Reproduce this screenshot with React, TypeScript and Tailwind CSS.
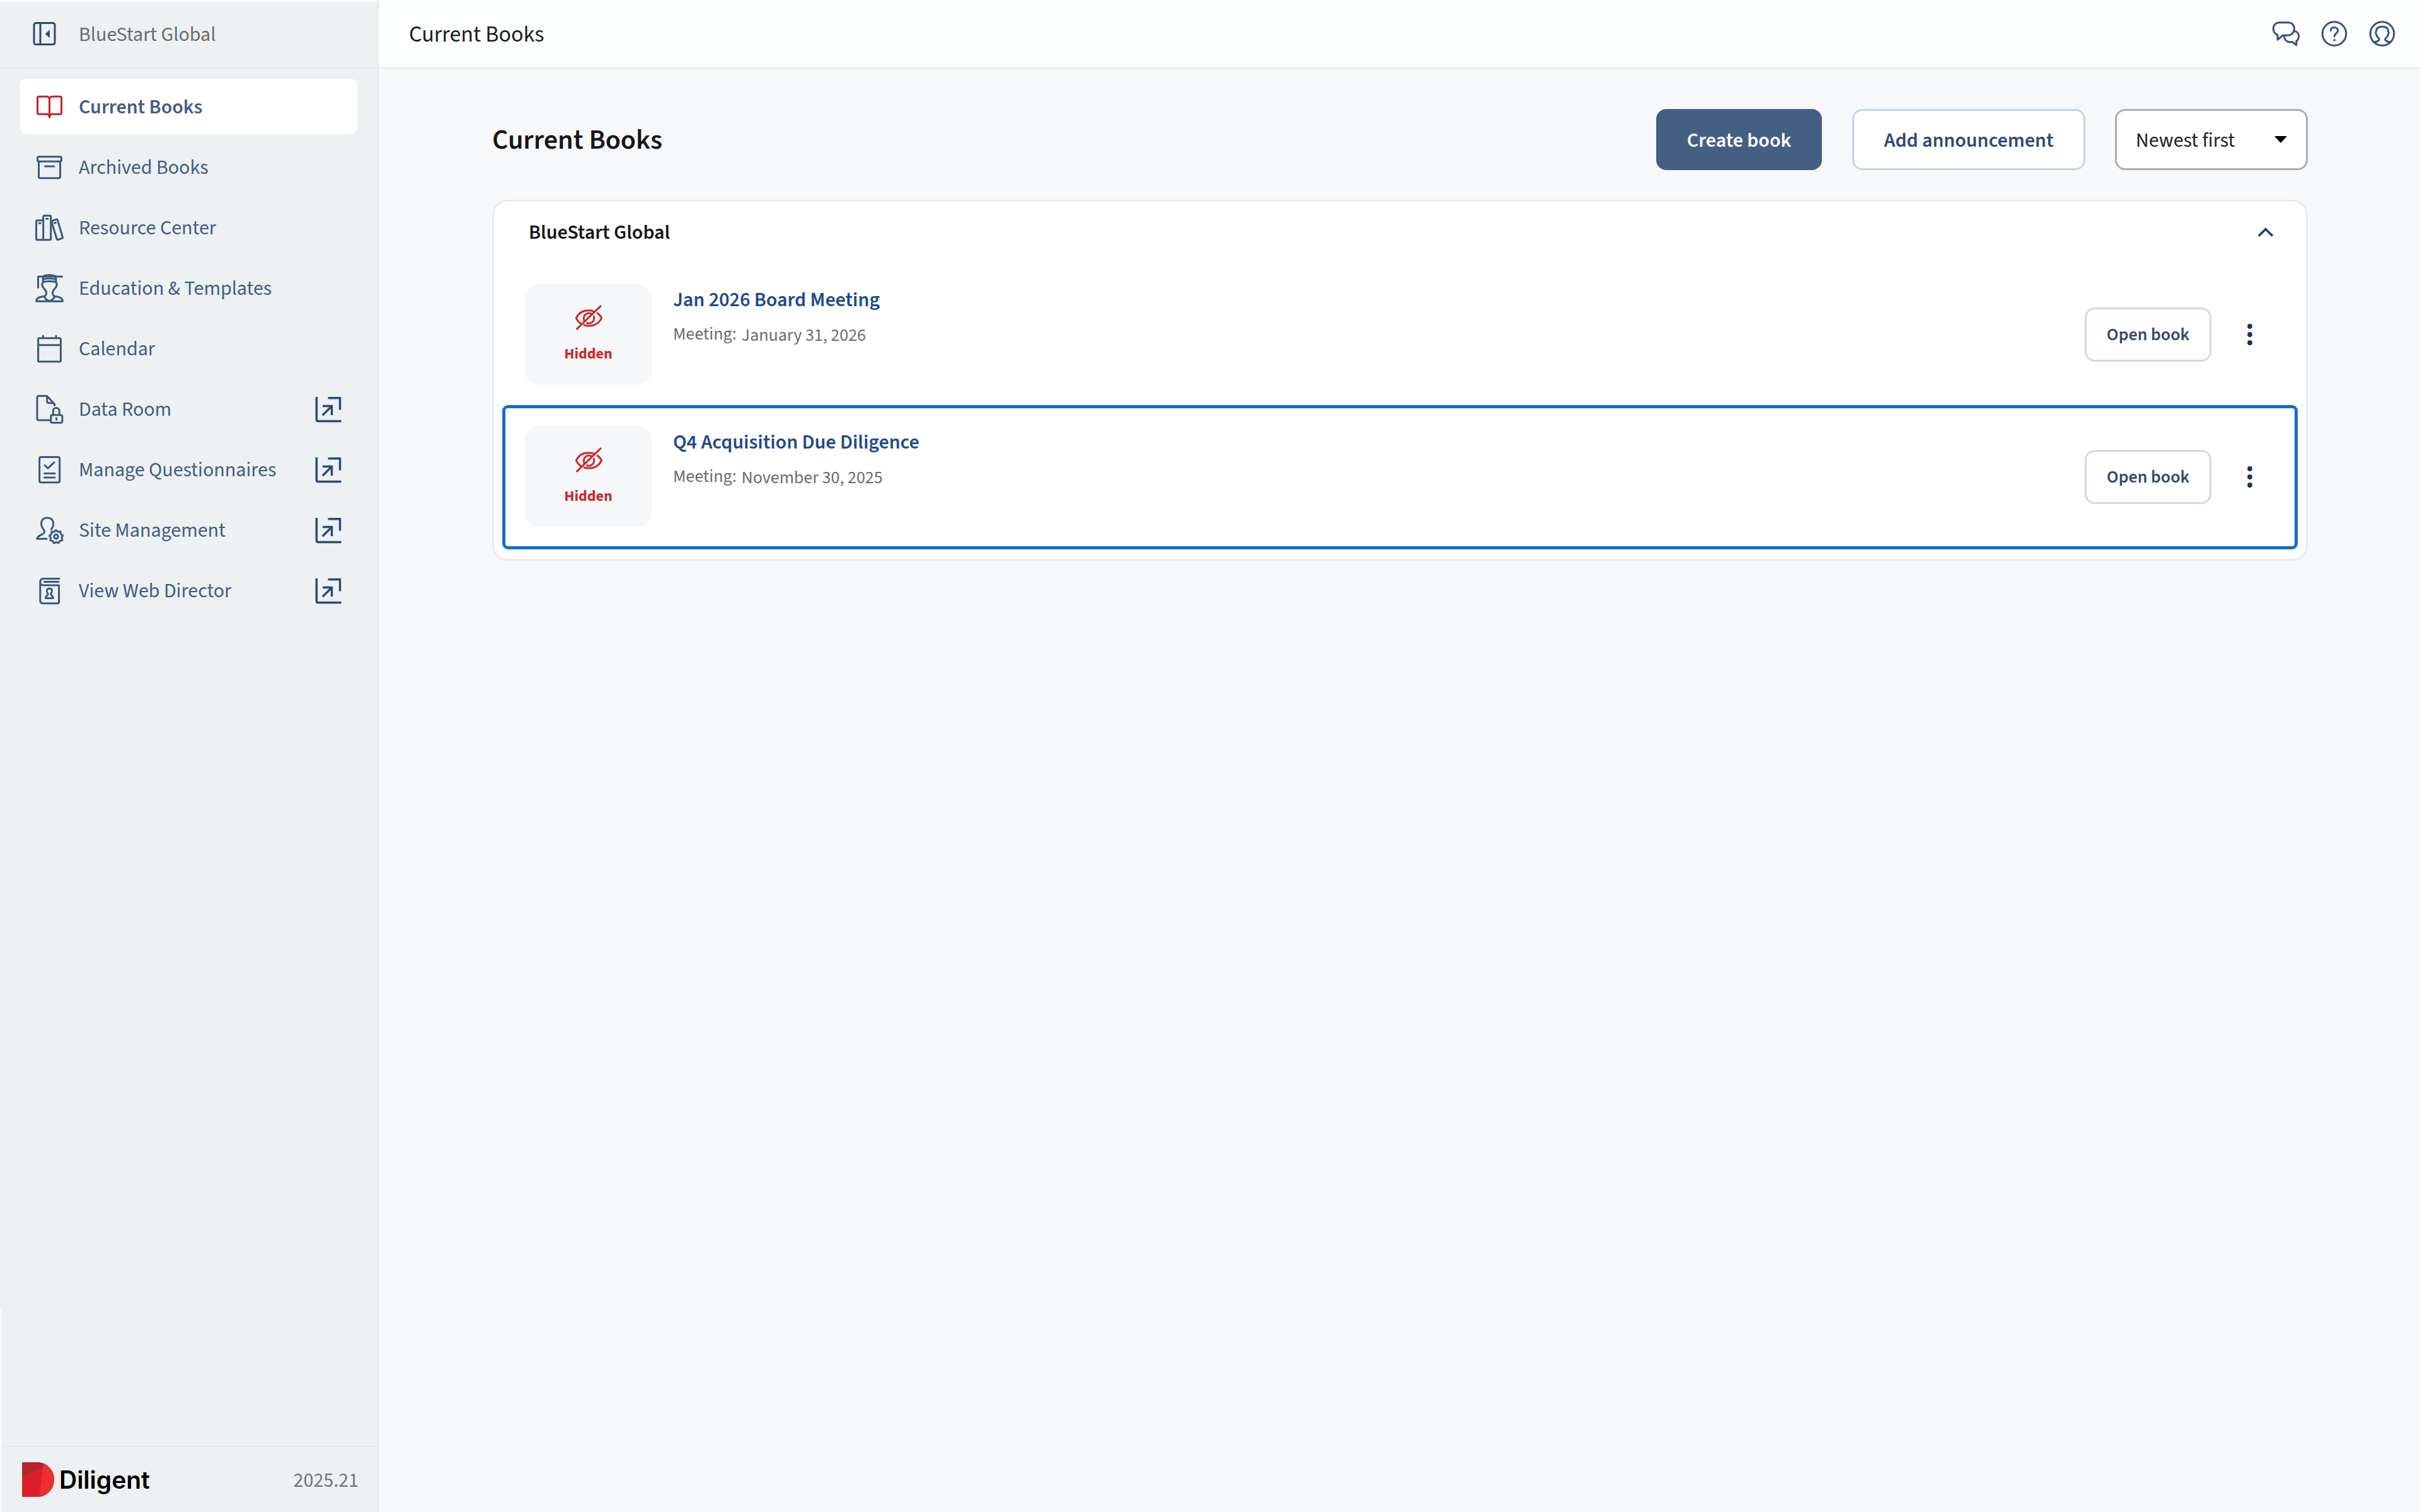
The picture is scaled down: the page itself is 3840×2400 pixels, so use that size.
import type { ReactNode } from "react";

function Icon({
  children,
  className = "",
  strokeWidth = 3,
}: {
  children: ReactNode;
  className?: string;
  strokeWidth?: number;
}) {
  return (
    <svg
      viewBox="0 0 48 48"
      className={`h-12 w-12 shrink-0 ${className}`}
      fill="none"
      stroke="currentColor"
      strokeWidth={strokeWidth}
      strokeLinecap="round"
      strokeLinejoin="round"
    >
      {children}
    </svg>
  );
}

const BookIcon = () => (
  <Icon>
    <path d="M24.5 11C23.5 9 22 8.3 20 8.3H8C6.5 8.3 5.5 9.3 5.5 10.8V34C5.5 35.5 6.5 36.3 8 36.3H20C22.5 36.3 24 38 24.5 41C25 38 26.5 36.3 29 36.3H41C42.5 36.3 43.5 35.5 43.5 34V10.8C43.5 9.3 42.5 8.3 41 8.3H29C27 8.3 25.5 9 24.5 11Z" />
    <path d="M24.5 11V41" />
  </Icon>
);

const ArchiveIcon = () => (
  <Icon>
    <path d="M8 7.8H41C42.5 7.8 43.5 8.6 43.5 10V13C43.5 14.4 42.5 15.2 41 15.2H8C6.5 15.2 5.5 14.4 5.5 13V10C5.5 8.6 6.5 7.8 8 7.8Z" />
    <path d="M7.5 15.5V39.5C7.5 41 8.5 41.7 10 41.7H39C40.5 41.7 41.5 41 41.5 39.5V15.5" />
    <path d="M17.5 23H32" />
  </Icon>
);

const ShelfIcon = () => (
  <Icon>
    <path d="M14.5 12.8H5.5C4.2 12.8 3.5 13.5 3.5 14.8V42C3.5 43.2 4.2 43.8 5.5 43.8H24.5C26 43.8 26.7 43.2 26.7 42V7C26.7 5.8 26 5.2 24.5 5.2H16.8C15.4 5.2 14.7 5.8 14.7 7V43.5" />
    <path d="M28.2 13.8L35.5 11.2C36.4 10.9 37 11.3 37.3 12.2L45.4 39.5C45.7 40.6 45.3 41.1 44.4 41.4L38 43.5C37 43.8 36.5 43.4 36.2 42.5L28 15.5C27.8 14.7 27.6 14 28.2 13.8Z" />
    <path d="M8 17.3H10.3M19.6 10.3H21.8M32.3 17.2L34.3 16.5" />
  </Icon>
);

const GraduateIcon = () => (
  <Icon>
    <path d="M6.5 23.5V6H44.5" />
    <path d="M14 6C19 2.6 30 2.6 35 6M14.2 6V14.3M34.8 6V14.3M14.2 10.5C20 8.6 29 8.6 34.8 10.5M14.2 14.8C20 13.2 29 13.2 34.8 14.8" />
    <path d="M14.2 14.5C12 18 12.6 21.5 15.5 24.5C18.5 28 20 29.5 19.5 33C19 36 17.5 37 15.5 37.5C7.5 38 3.8 40.5 3.6 45.3H45.4C45.2 40.5 41.5 38 33.5 37.5C31.5 37 30 36 29.5 33C29 29.5 30.5 28 33.5 24.5C36.4 21.5 37 18 34.8 14.5" />
    <path d="M16 37.8C18 41.5 20.5 44 24.5 45C28.5 44 31 41.5 33 37.8" />
  </Icon>
);

const CalendarIcon = () => (
  <Icon>
    <path d="M8.5 7.8H40.5C41.8 7.8 42.4 8.5 42.4 9.7V43.2C42.4 44.4 41.8 45 40.5 45H8.5C7.2 45 6.6 44.4 6.6 43.2V9.7C6.6 8.5 7.2 7.8 8.5 7.8Z" />
    <path d="M6.6 18.8H42.4M14.4 4V7.5M35 4V7.5" />
  </Icon>
);

const DataRoomIcon = () => (
  <Icon>
    <path d="M25.5 42H7.5C5.8 42 5 41.2 5 39.5V6C5 4.4 5.8 3.6 7.5 3.6H20.5L32.5 16.5V18.5" />
    <path d="M20.7 4V12C20.7 14 21.6 14.8 23.5 14.8H31" />
    <path d="M30.3 33.5V27.5C30.3 24.5 32.3 22.6 35.2 22.6S40.2 24.5 40.2 27.5V33.5" />
    <rect x="26.8" y="33.8" width="18" height="12.3" rx="2" />
    <path d="M35.6 38.8V41" />
  </Icon>
);

const QuestionnaireIcon = () => (
  <Icon>
    <rect x="8.6" y="4.6" width="32" height="40.2" rx="2.5" />
    <path d="M17 17.5L21.8 22.3L32 12.8M16.5 30.5H33M16.5 37H33" />
  </Icon>
);

const SiteIcon = () => (
  <Icon>
    <path d="M27.2 23.3C30 20 31.2 16.5 30.5 12C29.6 7.5 26 5 21 5C16 5 12.4 7.5 11.7 12C11 16.5 12.5 20 15 23.2C17.5 27 17 29 13.5 31C9 33 6 34 4.8 38.3H20" />
    <path d="M34.7 24.4L37.7 27.2L41.7 26.6L42.6 30.6L45.8 33L44 36.5L45 40.4L41.2 41.6L38.8 44.8L35.2 43.6L31.6 45.2L29.6 41.8L25.8 40.6L26.6 36.8L24.4 33.6L27.4 31L28 27L32 27.2Z" />
    <circle cx="35" cy="34.8" r="3.3" />
  </Icon>
);

const DirectorIcon = () => (
  <Icon>
    <path d="M40 5.5H15.5C12 5.5 9.8 7.5 9.8 11V40C9.8 43 11.5 44.8 14.5 44.8H37.5C38.9 44.8 39.6 44.1 39.6 42.8V16H15.5C12 16 9.8 14.5 9.8 11" />
    <path d="M16.5 10.6H39" />
    <path d="M24.4 21.2C21.6 21.2 20.3 23 20.3 25.2C20.3 27.2 21.2 28.5 22.3 29.6C22.5 32 18.5 32.5 18.4 36.5H30.4C30.3 32.5 26.3 32 26.5 29.6C27.6 28.5 28.5 27.2 28.5 25.2C28.5 23 27.2 21.2 24.4 21.2Z" />
  </Icon>
);

const ExternalIcon = () => (
  <svg
    viewBox="0 0 48 48"
    className="h-12 w-12 shrink-0 text-[#2f4b74]"
    fill="none"
    stroke="currentColor"
    strokeWidth={3.5}
  >
    <path d="M5.3 5V41C5.3 42.6 6.2 43.5 7.8 43.5H44.5" />
    <path d="M23.5 6.8H42.5V25.5" />
    <path d="M15 19.5H29.5V34M29.5 19.5L14.8 34.2" />
  </svg>
);

const EyeOffIcon = () => (
  <Icon>
    <path d="M5.5 42.2L43 5.8" />
    <path d="M11.3 33.5C8 31 5.5 28.2 4.3 25C7.8 17.5 15 12.8 24 12.8C26.8 12.8 29.4 13.3 31.8 14.2" />
    <path d="M37.8 17C41 19.2 43.4 22 44.5 25C41 32.5 33.5 37.3 24.5 37.3C21.8 37.3 19.3 36.9 17 36.1" />
    <path d="M16.8 28.5C16 26 16 23.5 17.3 21.2C19.3 17.3 24 16 28 17.9M32.4 22.3C33.6 27.5 31.2 31.5 26.5 33C24.8 33.5 23 33.5 21.3 32.8" />
  </Icon>
);

const navItems = [
  { label: "Current Books", icon: <BookIcon />, active: true },
  { label: "Archived Books", icon: <ArchiveIcon /> },
  { label: "Resource Center", icon: <ShelfIcon /> },
  { label: "Education & Templates", icon: <GraduateIcon /> },
  { label: "Calendar", icon: <CalendarIcon /> },
  { label: "Data Room", icon: <DataRoomIcon />, external: true },
  { label: "Manage Questionnaires", icon: <QuestionnaireIcon />, external: true },
  { label: "Site Management", icon: <SiteIcon />, external: true },
  { label: "View Web Director", icon: <DirectorIcon />, external: true },
];

const books = [
  { title: "Jan 2026 Board Meeting", date: "January 31, 2026", focused: false },
  { title: "Q4 Acquisition Due Diligence", date: "November 30, 2025", focused: true },
];

function Sidebar() {
  return (
    <aside className="relative flex w-[601px] shrink-0 flex-col border-r-2 border-[#e4e8ea] bg-[#edf1f2]">
      <div className="flex h-[109px] items-center gap-[23px] border-t-[3px] border-b-2 border-t-[#f7fdfc] border-b-[#e4e8ea] pl-[46px] text-[#30486f]">
        <Icon className="relative -top-px">
          <rect x="8" y="6.5" width="33" height="34" rx="3" />
          <path d="M18 6.5V40.5" />
          <path d="M32.5 18.5V29.5L26.5 24Z" fill="currentColor" strokeWidth="1" />
        </Icon>
        <span className="pl-2 text-[32px] text-[#696d6f]">BlueStart Global</span>
      </div>

      <nav className="flex flex-1 flex-col gap-2 px-8 pt-4">
        {navItems.map((item) => (
          <a
            key={item.label}
            className={`flex h-[88px] items-center rounded-[10px] pr-[22px] pl-[22px] text-[32px] text-[#455d82] ${
              item.active ? "bg-white font-semibold" : ""
            }`}
          >
            <span className={item.active ? "text-[#c8202b]" : "text-[#3f587f]"}>{item.icon}</span>
            <span className="flex-1 pt-px pl-[23px]">{item.label}</span>
            {item.external && <ExternalIcon />}
          </a>
        ))}
      </nav>

      <div className="flex h-[105px] items-center border-t-2 border-[#e4e8ea] pr-[30px] pl-[35px]">
        <svg viewBox="0 0 51 55" className="h-[55px] w-[51px]">
          <path d="M0 0H24C39 0 51 12 51 27.5S39 55 24 55H0Z" fill="#d91f29" />
          <path d="M33 9.5L27 55C40.5 53.5 51 42 51 27.5C51 17 44 6 34.5 2.2Z" fill="#ee2e33" />
          <path d="M0 0H24C28 0 31.5 .8 34.5 2.2L33 9.5L0 23Z" fill="#b3262d" />
        </svg>
        <span className="flex-1 pt-[2px] pl-2 font-['Inter'] text-[39px] font-semibold text-black">
          Diligent
        </span>
        <span className="pt-[2px] text-[32px] text-[#717577]">2025.21</span>
      </div>
      {/* thin light edge on the lower part of the rail */}
      <div className="absolute bottom-0 left-0 h-[322px] w-[3px] bg-[#f9fbfb]" />
    </aside>
  );
}

function TopBar() {
  return (
    <header className="flex h-[109px] items-center justify-between border-b-2 border-[#e6e8ea] bg-[#fdfefe] pr-9 pl-12">
      <span className="pt-[2px] text-[36px] text-[#1b1c1d]">Current Books</span>
      <div className="flex gap-7 text-[#3a5279]">
        <Icon>
          <path d="M13 5.8H27C32.6 5.8 36.5 9.8 36.5 15.3S32.6 26 27 26H18.5L10 33.2V25.3C5.8 23.6 3.2 20 3.2 15.3C3.2 9.8 7.4 5.8 13 5.8Z" />
          <path d="M37 19.5C41 20 43.7 23.5 43.7 27.8C43.7 31.3 42.5 33.5 39.8 35.3V41.5L33.5 36.8H30C24.5 36.8 20.8 33 20.5 27" />
        </Icon>
        <Icon>
          <circle cx="24" cy="23.5" r="18.8" />
          <path d="M18.3 18.5C18.5 15.3 20.8 13.6 24 13.6S29.8 15.5 29.8 18.6C29.8 22.6 24.2 22.8 24.2 27.8" />
          <path d="M24.2 33.5V33.8" strokeWidth="3.6" />
        </Icon>
        <Icon>
          <circle cx="24" cy="23.5" r="18.8" />
          <path d="M11 36.8C15 36.2 19.2 36 19.2 31.5C17 29.5 14.8 27.5 14.8 24.8C13.6 23.5 13.6 21 14.4 19.8C14.4 15 18 12.2 24 12.2S33.6 15 33.6 19.8C34.4 21 34.4 23.5 33.2 24.8C33.2 27.5 31 29.5 28.8 31.5C28.8 36 33 36.2 37 36.8" />
        </Icon>
      </div>
    </header>
  );
}

function BookRow({ title, date, focused }: { title: string; date: string; focused: boolean }) {
  return (
    <div
      className={`flex items-start rounded-[9px] border-[5px] pt-7 pr-[59px] pl-[30px] ${
        focused ? "h-[229px] border-[#1270c9]" : "h-[226px] border-transparent"
      }`}
    >
      <div className="flex h-[161px] w-[203px] flex-col items-center rounded-3xl bg-[#f6f7f9] pt-[30px] text-[#cb2931]">
        <EyeOffIcon />
        <span className="mt-[18px] text-[24px] leading-8 font-bold">Hidden</span>
      </div>
      <div className="flex flex-1 flex-col gap-[14px] pt-[6px] pl-[33px] leading-10">
        <a className="text-[32px] font-semibold text-[#204a8b]">{title}</a>
        <div className="flex gap-2 text-[28px] text-[#6b6c6e]">
          <span>Meeting:</span>
          <span className="pt-[2px]">{date}</span>
        </div>
      </div>
      <div className="flex h-[161px] items-center gap-[49px]">
        <button className="h-[86px] w-[201px] rounded-2xl border-[3px] border-[#d0d9e4] bg-white pt-px text-[28px] font-semibold text-[#334a6d]">
          Open book
        </button>
        <svg viewBox="0 0 24 48" className="h-12 w-6 fill-[#1b3156]">
          <circle cx="12" cy="11" r="3.9" />
          <circle cx="12" cy="24" r="3.9" />
          <circle cx="12" cy="37" r="3.9" />
        </svg>
      </div>
    </div>
  );
}

export default function App() {
  return (
    <div className="flex h-[2400px] w-[3840px] overflow-hidden bg-[#f6f8fa] font-['Source_Sans_3','Noto_Sans_CJK_SC',sans-serif]">
      <Sidebar />
      <div className="flex flex-1 flex-col">
        <TopBar />
        <main className="pt-16 pr-[178px] pl-[180px]">
          <div className="flex h-[97px] items-center">
            <h1 className="flex-1 pt-[3px] text-[44px] font-semibold text-[#161718]">
              Current Books
            </h1>
            <button className="h-[97px] w-[263px] rounded-2xl bg-[#455f83] pt-[2px] text-[32px] font-semibold text-white">
              Create book
            </button>
            <button className="ml-12 h-[97px] w-[370px] rounded-2xl border-[3px] border-[#c6d4e3] bg-white pt-[2px] text-[32px] font-semibold text-[#2f4a74]">
              Add announcement
            </button>
            <button className="ml-[47px] flex h-[97px] w-[306px] items-center justify-between rounded-2xl border-[3px] border-[#acaeb0] bg-white pr-[30px] pl-[30px]">
              <span className="pt-[2px] text-[32px] text-[#222324]">Newest first</span>
              <svg viewBox="0 0 20 11" className="h-[11px] w-5">
                <path d="M0 0H20L10 11Z" />
              </svg>
            </button>
          </div>

          <section className="mt-[47px] rounded-3xl border-[3px] border-[#e9ebed] bg-white px-[13px] pb-[15px]">
            <div className="flex h-[97px] items-center justify-between pr-[37px] pl-[42px]">
              <h2 className="pt-px text-[32px] font-semibold text-[#161718]">BlueStart Global</h2>
              <svg
                viewBox="0 0 28 18"
                className="h-[18px] w-7"
                fill="none"
                stroke="#1f3a63"
                strokeWidth="3.6"
              >
                <path d="M3 14.5L14 3.8L25 14.5" />
              </svg>
            </div>
            {books.map((book) => (
              <BookRow key={book.title} {...book} />
            ))}
          </section>
        </main>
      </div>
    </div>
  );
}
